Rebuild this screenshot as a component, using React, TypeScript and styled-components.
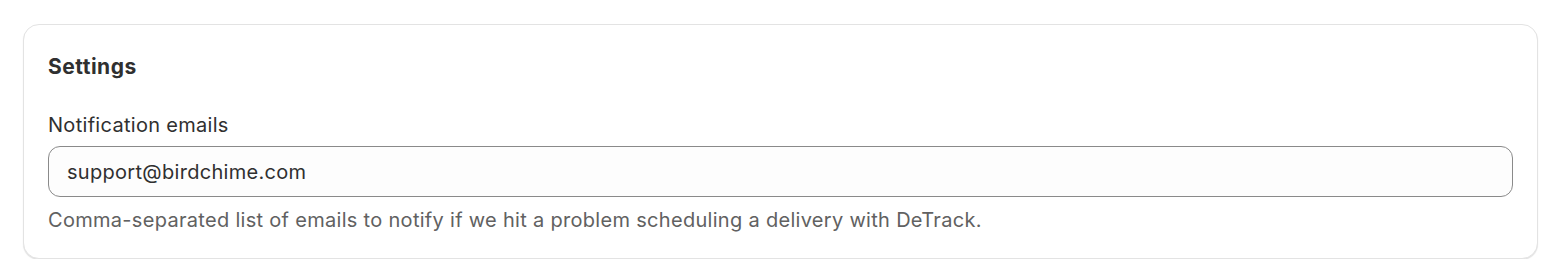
import React from 'react'
import styled, { createGlobalStyle } from 'styled-components'

const GlobalStyle = createGlobalStyle`
  body {
    margin: 0;
    background: #ffffff;
    font-family: Inter, "Noto Sans", sans-serif;
    color: #303030;
  }
`

const Page = styled.div`
  padding: 24px 26px 0 23px;
`

const Card = styled.section`
  background: #ffffff;
  border: 1px solid #e3e3e3;
  border-radius: 16px;
  box-shadow: 0 1px 1px rgba(0, 0, 0, 0.12);
  padding: 27px 24px 23px 24px;
  display: flex;
  flex-direction: column;
`

const Title = styled.h2`
  margin: 0 0 28px 0;
  font-size: 21px;
  line-height: 30px;
  font-weight: 650;
  letter-spacing: 0.5px;
  color: #303030;
`

const Field = styled.div`
  display: flex;
  flex-direction: column;
`

const Label = styled.label`
  font-size: 20px;
  line-height: 30px;
  letter-spacing: 0.3px;
  color: #303030;
  margin-bottom: 6px;
`

const Input = styled.input`
  box-sizing: border-box;
  height: 51px;
  width: 100%;
  padding: 0 18px;
  border: 1px solid #8a8a8a;
  border-radius: 12px;
  background: #fdfdfd;
  font-family: inherit;
  font-size: 20px;
  letter-spacing: 0.3px;
  color: #303030;
  outline: none;
`

const HelpText = styled.p`
  margin: 8px 0 0 0;
  font-size: 20px;
  line-height: 30px;
  letter-spacing: 0.3px;
  color: #616161;
`

export default function App() {
  return (
    <>
      <GlobalStyle />
      <Page>
        <Card>
          <Title>Settings</Title>
          <Field>
            <Label htmlFor="emails">Notification emails</Label>
            <Input id="emails" defaultValue="support@birdchime.com" />
            <HelpText>
              Comma-separated list of emails to notify if we hit a problem scheduling a delivery with DeTrack.
            </HelpText>
          </Field>
        </Card>
      </Page>
    </>
  )
}
